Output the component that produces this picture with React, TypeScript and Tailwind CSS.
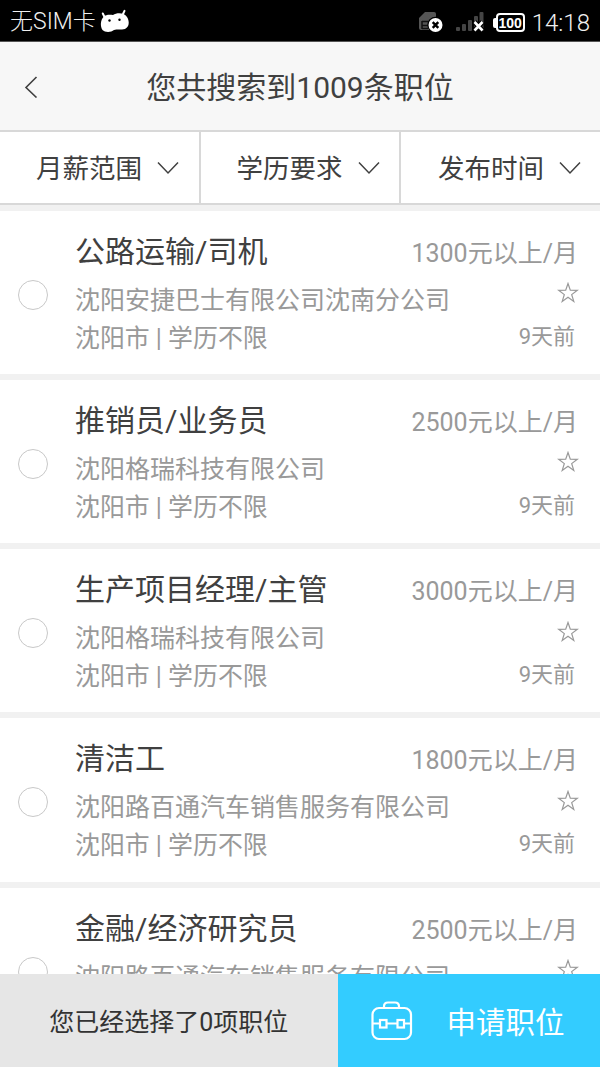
const jobs = [
  { title: "公路运输/司机", company: "沈阳安捷巴士有限公司沈南分公司", pay: "1300元以上/月" },
  { title: "推销员/业务员", company: "沈阳格瑞科技有限公司", pay: "2500元以上/月" },
  { title: "生产项目经理/主管", company: "沈阳格瑞科技有限公司", pay: "3000元以上/月" },
  { title: "清洁工", company: "沈阳路百通汽车销售服务有限公司", pay: "1800元以上/月" },
  { title: "金融/经济研究员", company: "沈阳路百通汽车销售服务有限公司", pay: "2500元以上/月" },
];

function StatusBar() {
  return (
    <div className="flex h-[42px] shrink-0 items-center border-b border-[#555] bg-black pl-[10px] pr-[10px] text-[#f0f0f0]">
      <span className="pt-[2px] text-[23px] leading-[40px] font-light">无SIM卡</span>
      <svg className="ml-[4px]" width="32" height="26" viewBox="0 0 32 26">
        <path d="M4.500 9 L2.800 5.500 M23 6 L24.500 2.800" stroke="#fff" strokeWidth="2" strokeLinecap="round" />
        <path d="M3.500 9 C6 6.500 9 6.800 13 7 C17 4.500 24 4.500 27 9 C30 14 29 19 25 21 C21 22 17 21 14 22 C11 24.500 5 24.500 2.500 22 C0 18 0.500 12 3.500 9Z" fill="#fff" />
        <circle cx="9.500" cy="12.500" r="1.200" fill="#000" />
        <circle cx="19.500" cy="11.800" r="1.200" fill="#000" />
      </svg>
      <div className="flex-1" />
      <svg className="mt-[4px]" width="26" height="24" viewBox="0 0 26 24">
        <path d="M0 7 L6 1 H15 Q17 1 17 3 V19 H2 Q0 19 0 17Z" fill="#555" />
        <path d="M3 10.500 H11 M3 14.500 H9 M3 10 V18 M3 17.500 H9" stroke="#111" strokeWidth="1.500" fill="none" />
        <circle cx="16.500" cy="14" r="8.200" fill="#000" />
        <circle cx="16.500" cy="14" r="7" fill="#fff" />
        <path d="M13.700 11.200 L19.300 16.800 M19.300 11.200 L13.700 16.800" stroke="#000" strokeWidth="2.400" />
      </svg>
      <svg className="ml-[11px] mt-[3px]" width="30" height="24" viewBox="0 0 30 24">
        <g fill="#454545">
          <rect x="0" y="17" width="4" height="4" rx="1" />
          <rect x="6" y="14" width="4" height="7" rx="1" />
          <rect x="12" y="10" width="4" height="11" rx="1" />
          <rect x="18" y="6" width="4" height="15" rx="1" />
          <rect x="23.500" y="2" width="4" height="19" rx="1" />
        </g>
        <path d="M18.500 12 L26.500 20.500 M26.500 12 L18.500 20.500" stroke="#000" strokeWidth="5" />
        <path d="M18.500 12 L26.500 20.500 M26.500 12 L18.500 20.500" stroke="#fff" strokeWidth="2.600" />
      </svg>
      <div className="ml-[7px] mt-[4px] flex items-center">
        <div className="h-[10px] w-[3px] rounded-l-[2px] bg-white" />
        <div className="flex h-[19px] w-[29px] items-center justify-center rounded-[4px] border-2 border-white font-['Liberation_Sans'] text-[14px] font-bold leading-none text-white">
          100
        </div>
      </div>
      <span className="ml-[7px] pt-[4px] text-[24px] leading-[38px] font-light">14:18</span>
    </div>
  );
}

function Filter({ label, last }: { label: string; last?: boolean }) {
  return (
    <div className={last ? "flex flex-1 items-center pl-[37px]" : "flex w-[200.5px] items-center border-r-2 border-[#d8d8d8] pl-[36px]"}>
      <span className="pt-[2px] text-[26.5px] leading-[38px]">{label}</span>
      <svg className={last ? "ml-[14.5px]" : "ml-[15px]"} width="22" height="14" viewBox="0 0 22 14">
        <path d="M1 1.500 L11 12 L21 1.500" fill="none" stroke="#404040" strokeWidth="1.500" />
      </svg>
    </div>
  );
}

function JobRow({ job }: { job: (typeof jobs)[number] }) {
  return (
    <div className="flex h-[169.25px] shrink-0 border-b-[6px] border-[#f1f1f1] bg-white pl-[18px] pr-[22px] text-[25px] text-[#999]">
      <div className="mt-[69px] size-[30px] shrink-0 rounded-full border-[1.5px] border-[#c8c8c8]" />
      <div className="ml-[27px] flex flex-1 flex-col whitespace-nowrap pt-[20px]">
        <div className="flex h-[42px] justify-between">
          <span className="text-[30px] leading-[42px] text-[#404040]">{job.title}</span>
          <span className="leading-[45px]">{job.pay}</span>
        </div>
        <div className="mt-[9px] flex justify-between">
          <span className="leading-[38px]">{job.company}</span>
          <svg className="-mr-px mt-[0.5px]" width="22" height="22" viewBox="0 0 22 22">
            <path d="M11 1.500 L13.300 8.200 L20.300 8.300 L14.700 12.600 L16.800 19.400 L11 15.300 L5.200 19.400 L7.300 12.600 L1.700 8.300 L8.700 8.200Z" fill="none" stroke="#999" strokeWidth="1.200" />
          </svg>
        </div>
        <div className="flex justify-between pr-[3px]">
          <span className="text-[24.9px] leading-[37px]">沈阳市 | 学历不限</span>
          <span className="text-[22px] leading-[33px]">9天前</span>
        </div>
      </div>
    </div>
  );
}

export default function App() {
  return (
    <div className="flex h-[1067px] w-[600px] flex-col overflow-hidden bg-[#f1f1f1] font-[Roboto,'Noto_Sans_CJK_SC',sans-serif] text-[#404040]">
      <StatusBar />
      <header className="flex h-[88px] shrink-0 items-center bg-[#f7f7f7] pl-[24px] pr-[24px]">
        <svg className="mt-px" width="14" height="22" viewBox="0 0 14 22">
          <path d="M12.500 1 L2 11.500 L12.500 21.500" fill="none" stroke="#404040" strokeWidth="1.600" />
        </svg>
        <h1 className="flex-1 pr-[14px] pt-[4px] text-center text-[30px] leading-[44px]">您共搜索到1009条职位</h1>
      </header>
      <nav className="flex h-[75px] shrink-0 border-t-2 border-b-2 border-[#d8d8d8] bg-white">
        <Filter label="月薪范围" />
        <Filter label="学历要求" />
        <Filter label="发布时间" last />
      </nav>
      <main className="flex min-h-0 flex-1 flex-col overflow-hidden pt-[5.7px]">
        {jobs.map((job) => (
          <JobRow key={job.title} job={job} />
        ))}
      </main>
      <footer className="flex h-[93px] shrink-0 bg-[#e6e6e6]">
        <div className="flex w-[337.5px] items-center justify-center pt-[4px] text-[25px] leading-[38px] text-[#333]">您已经选择了0项职位</div>
        <button className="flex flex-1 items-center bg-[#33ccff] pl-[33px] text-white">
          <svg width="42" height="42" viewBox="0 0 42 42" fill="none" stroke="#fff" strokeWidth="2.200">
            <rect x="1.500" y="8" width="38.500" height="31" rx="6.500" />
            <path d="M13 8 V6.500 Q13 2.500 17 2.500 H24 Q28 2.500 28 6.500 V8" />
            <path d="M2 23.500 H9 M16 23.500 H26.500 M34 23.500 H40" />
            <rect x="9" y="20" width="6.500" height="7.500" />
            <rect x="26.500" y="20" width="6.500" height="7.500" />
          </svg>
          <span className="ml-[34px] pt-[5px] text-[29.5px] leading-[40px]">申请职位</span>
        </button>
      </footer>
    </div>
  );
}
